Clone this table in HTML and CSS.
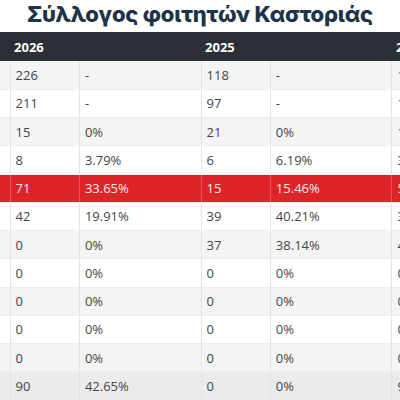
FILE: index.html
```html
<!DOCTYPE html>
<html lang="el">
<head>
    <meta charset="UTF-8">
    <meta name="viewport" content="width=device-width, initial-scale=1.0">
    <title>Σύλλογος φοιτητών Καστοριάς</title>
    <link rel="stylesheet" href="styles.css">
</head>
<body>
    <h1 class="title">Σύλλογος φοιτητών Καστοριάς</h1>

    <div class="table-wrap">
        <table class="stats">
            <colgroup>
                <col class="c-label">
                <col class="c-num">
                <col class="c-pct">
                <col class="c-num">
                <col class="c-pct">
                <col class="c-num">
                <col class="c-pct">
            </colgroup>
            <thead>
                <tr>
                    <th></th>
                    <th colspan="2">2026</th>
                    <th colspan="2">2025</th>
                    <th colspan="2">2024</th>
                </tr>
            </thead>
            <tbody>
                <tr><td></td><td>226</td><td>-</td><td>118</td><td>-</td><td>162</td><td>-</td></tr>
                <tr><td></td><td>211</td><td>-</td><td>97</td><td>-</td><td>148</td><td>-</td></tr>
                <tr><td></td><td>15</td><td>0%</td><td>21</td><td>0%</td><td>14</td><td>0%</td></tr>
                <tr><td></td><td>8</td><td>3.79%</td><td>6</td><td>6.19%</td><td>3</td><td>2.03%</td></tr>
                <tr class="winner"><td></td><td>71</td><td>33.65%</td><td>15</td><td>15.46%</td><td>52</td><td>35.14%</td></tr>
                <tr><td></td><td>42</td><td>19.91%</td><td>39</td><td>40.21%</td><td>37</td><td>25%</td></tr>
                <tr><td></td><td>0</td><td>0%</td><td>37</td><td>38.14%</td><td>41</td><td>27.7%</td></tr>
                <tr><td></td><td>0</td><td>0%</td><td>0</td><td>0%</td><td>0</td><td>0%</td></tr>
                <tr><td></td><td>0</td><td>0%</td><td>0</td><td>0%</td><td>0</td><td>0%</td></tr>
                <tr><td></td><td>0</td><td>0%</td><td>0</td><td>0%</td><td>0</td><td>0%</td></tr>
                <tr><td></td><td>0</td><td>0%</td><td>0</td><td>0%</td><td>0</td><td>0%</td></tr>
                <tr class="total"><td></td><td>90</td><td>42.65%</td><td>0</td><td>0%</td><td>9</td><td>6.08%</td></tr>
            </tbody>
        </table>
    </div>
</body>
</html>
```

FILE: styles.css
```css
html, body {
    background: #ffffff;
    margin: 0;
    padding: 0;
    font-family: "Open Sans", Arial, sans-serif;
    overflow: hidden;
}

.title {
    margin: 0;
    height: 32px;
    line-height: 28px;
    text-align: center;
    font-family: Inter, "Noto Sans", sans-serif;
    font-size: 22px;
    font-weight: 800;
    color: #1e3348;
    letter-spacing: -0.2px;
}

.table-wrap {
    width: 400px;
    overflow: hidden;
}

.stats {
    border-collapse: collapse;
    table-layout: fixed;
    width: 583px;
    font-size: 13px;
    color: #454545;
}

.c-label { width: 10px; }
.c-num { width: 69px; }
.c-pct { width: 121px; }

.stats thead tr {
    background: #2c3036;
    height: 29px;
}

.stats th {
    color: #ffffff;
    font-weight: 700;
    text-align: left;
    padding: 0 4px;
}

.stats tbody tr {
    height: 28.25px;
    background: #ffffff;
}

.stats tbody tr:nth-child(odd) {
    background: #f4f4f4;
}

.stats td {
    padding: 0 5px;
    border-left: 1px solid #e3e3e3;
    border-bottom: 1px solid #ececec;
    white-space: nowrap;
    overflow: hidden;
}

.stats td:first-child {
    border-left: none;
}

.stats tbody tr.winner {
    background: #dd2429;
    color: #fbeaea;
}

.stats tr.winner td {
    border-left-color: #e65a5e;
}

.stats tbody tr.total {
    background: #ebebeb;
}
```
